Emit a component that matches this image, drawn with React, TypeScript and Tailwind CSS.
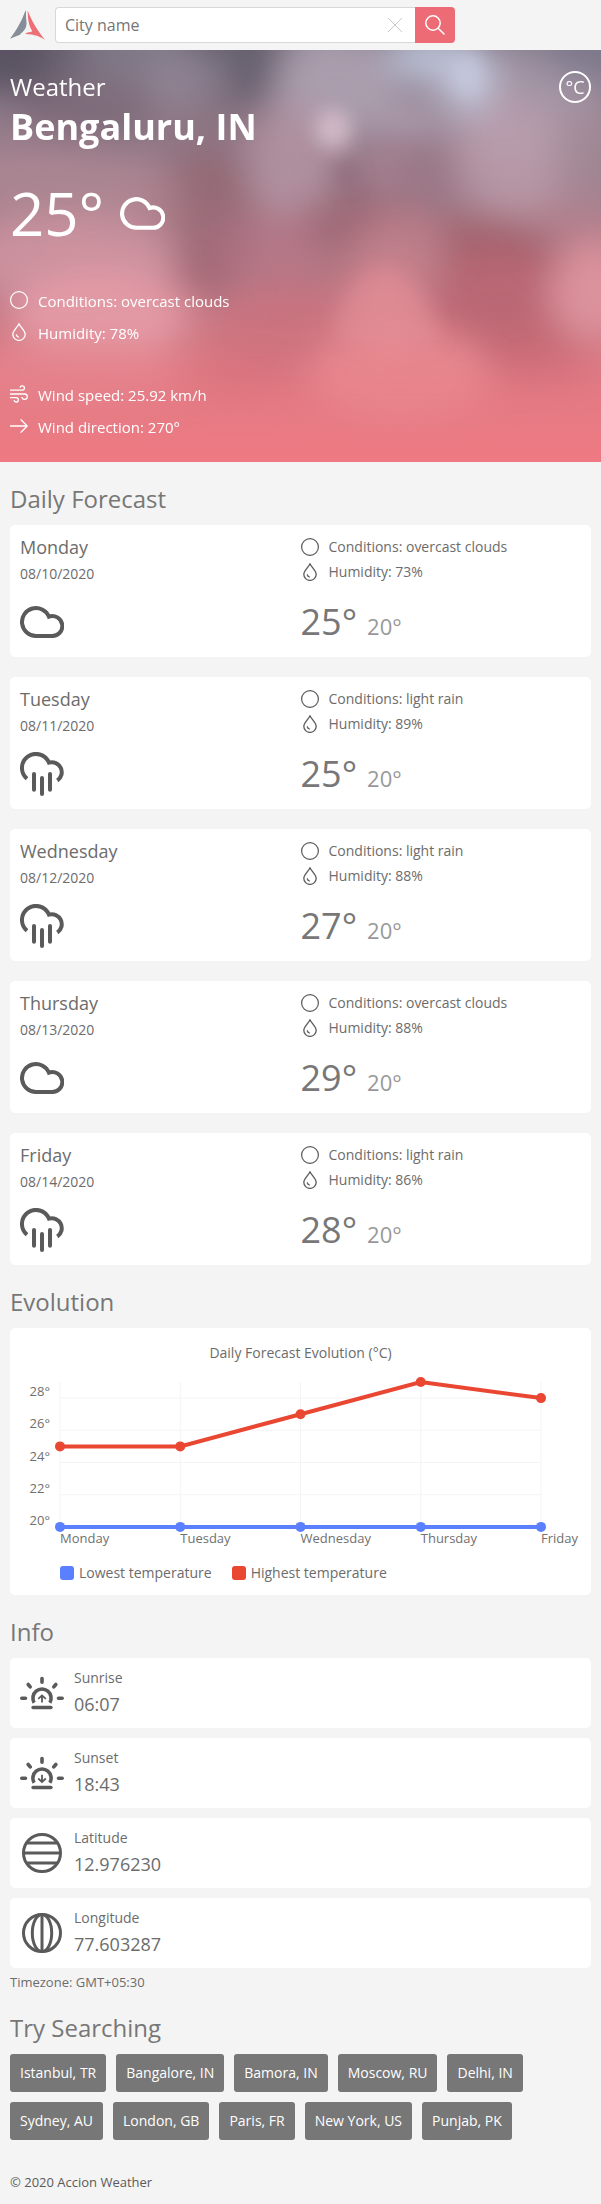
import React from "react";

type IconProps = { className?: string };

function Logo() {
  return (
    <svg viewBox="0 0 105 90" className="h-[30px] w-[35px]" aria-hidden="true">
      <path d="M47 1C38 26 22 58 0 86L29 74C35 62 49 58 49 40Z" fill="#868e99" />
      <path d="M47 1L49 42C49 58 38 66 29 74L20 77Z" fill="#868e99" />
      <path d="M53 1C64 32 84 64 105 90C92 80 74 73 46 72C50 66 62 68 67 63C58 52 53 30 53 1Z" fill="#ee6e77" />
    </svg>
  );
}

function CloudIcon({ className }: IconProps) {
  return (
    <svg viewBox="0 0 44 44" className={className} fill="none" stroke="currentColor" strokeWidth="4" aria-hidden="true">
      <path d="M16 36A14 14 0 1 1 28.9 16.6A10 10 0 1 1 32 36Z" />
    </svg>
  );
}

function RainIcon({ className }: IconProps) {
  return (
    <svg viewBox="0 0 44 44" className={className} fill="none" stroke="currentColor" strokeWidth="4" aria-hidden="true">
      <path d="M7 26.7A14 14 0 1 1 28.9 10.6A10 10 0 0 1 37.3 28.5" />
      <path d="M14 22V37.8M22 26V42M30 22V37.8" strokeLinecap="round" />
    </svg>
  );
}

function CircleIcon({ className }: IconProps) {
  return (
    <svg viewBox="0 0 18 18" className={className} fill="none" stroke="currentColor" strokeWidth="1.2" aria-hidden="true">
      <circle cx="9" cy="9" r="8.4" />
    </svg>
  );
}

function DropIcon({ className }: IconProps) {
  return (
    <svg viewBox="0 0 18 18" className={className} fill="none" stroke="currentColor" strokeWidth="1.3" strokeLinecap="round" strokeLinejoin="round" aria-hidden="true">
      <path d="M9 .7C7.6 4 2.8 7.9 2.8 11.3a6.2 6.1 0 0 0 12.4 0C15.2 7.9 10.4 4 9 .7Z" />
      <path d="M6.3 11.8Q6.8 13.5 8.4 14" />
    </svg>
  );
}

function WindIcon({ className }: IconProps) {
  return (
    <svg viewBox="0 0 18 18" className={className} fill="none" stroke="currentColor" strokeWidth="1.3" aria-hidden="true">
      <path d="M0 5.2H12.3a2.2 2.2 0 1 0-2.2-2.5" />
      <path d="M0 9H14.6a2.7 2.7 0 1 1-2.7 3" />
      <path d="M0 12.6H6.2a2.2 2.2 0 1 1-2.2 2.5" />
    </svg>
  );
}

function ArrowIcon({ className }: IconProps) {
  return (
    <svg viewBox="0 0 18 18" className={className} fill="none" stroke="currentColor" strokeWidth="1.3" strokeLinecap="round" strokeLinejoin="round" aria-hidden="true">
      <path d="M.5 9H17.2M11 2.8L17.2 9L11 15.2" />
    </svg>
  );
}

function SunIcon({ rising, className }: IconProps & { rising: boolean }) {
  return (
    <svg viewBox="0 0 44 44" className={className} fill="none" stroke="currentColor" strokeWidth="3.6" strokeLinecap="round" aria-hidden="true">
      <path d="M22 7.5V11.2M1.8 27.3H5.5M38.5 27.3H42.2M8.2 13.5L10.2 15.9M35.8 13.5L33.8 15.9" />
      <path d="M14.2 31.8A9.1 9.1 0 1 1 29.8 31.8" strokeLinecap="butt" />
      <path d="M13.1 36.5H30.9" />
      <path
        d={rising ? "M22 31.6V24.8M18.2 27.9L22 24.4L25.8 27.9" : "M22 23.8V30.6M18.2 27.5L22 31L25.8 27.5"}
        strokeWidth="1.8"
        strokeLinecap="butt"
      />
    </svg>
  );
}

function LatitudeIcon({ className }: IconProps) {
  return (
    <svg viewBox="0 0 44 44" className={className} fill="none" stroke="currentColor" strokeWidth="3" aria-hidden="true">
      <circle cx="22" cy="22" r="18.5" />
      <path d="M6.5 12H37.5M3.5 22H40.5M6.5 32H37.5" />
    </svg>
  );
}

function LongitudeIcon({ className }: IconProps) {
  return (
    <svg viewBox="0 0 44 44" className={className} fill="none" stroke="currentColor" strokeWidth="3" aria-hidden="true">
      <circle cx="22" cy="22" r="18.5" />
      <ellipse cx="22" cy="22" rx="9.7" ry="18.5" />
      <path d="M22 3.5V40.5" />
    </svg>
  );
}

const blobs: [number, number, number, number, string, number][] = [
  // cx, cy, rx, ry, colour, opacity
  [0, 0, 90, 42, "#5a5262", 1],
  [235, 8, 55, 55, "#645d6b", 0.9],
  [100, 5, 60, 20, "#7c7583", 0.6],
  [190, 28, 38, 26, "#958c9c", 0.7],
  [335, 35, 60, 55, "#ada1b0", 0.9],
  [520, 60, 90, 60, "#a89bab", 0.8],
  [430, 8, 45, 25, "#c0c6dc", 0.9],
  [470, 28, 26, 34, "#c6cade", 0.9],
  [405, 68, 28, 18, "#b9abbd", 0.7],
  [600, 0, 60, 30, "#7d788c", 0.9],
  [85, 60, 70, 32, "#7b6876", 0.8],
  [215, 90, 60, 45, "#8b7380", 0.7],
  [50, 140, 100, 45, "#ac8893", 0.8],
  [210, 170, 50, 70, "#946773", 0.85],
  [150, 160, 38, 45, "#b38793", 0.5],
  [290, 110, 45, 60, "#b495a4", 0.8],
  [420, 125, 70, 40, "#997786", 0.8],
  [515, 110, 60, 60, "#bfa0ae", 0.7],
  [350, 135, 20, 20, "#8d6a79", 0.8],
  [382, 122, 20, 16, "#b08b9b", 0.7],
  [590, 110, 40, 60, "#a38995", 0.7],
  [360, 175, 70, 30, "#98636f", 0.7],
  [490, 215, 80, 50, "#9e606c", 0.9],
  [580, 175, 50, 30, "#b5828f", 0.6],
  [70, 210, 110, 45, "#cd94a1", 0.9],
  [265, 200, 60, 40, "#b8788a", 0.6],
  [400, 210, 48, 50, "#c2838f", 0.8],
  [205, 215, 30, 30, "#a66777", 0.6],
  [100, 265, 90, 45, "#e69ca7", 0.9],
  [280, 285, 60, 50, "#c9717d", 0.6],
  [500, 260, 70, 60, "#bd6974", 0.85],
  [598, 240, 50, 50, "#de959e", 0.9],
  [385, 265, 42, 50, "#de8a92", 0.8],
  [400, 325, 90, 50, "#e88991", 0.9],
  [240, 325, 45, 25, "#d3717b", 0.6],
  [540, 310, 50, 25, "#cb6b76", 0.7],
  [70, 325, 110, 35, "#e68892", 0.7],
];

function CloudySky() {
  return (
    <svg
      viewBox="0 0 601 412"
      preserveAspectRatio="none"
      className="absolute inset-0 h-full w-full"
      aria-hidden="true"
    >
      <defs>
        <linearGradient id="sky" x1="0" y1="0" x2="0" y2="1">
          <stop offset="0" stopColor="#837b8a" />
          <stop offset=".3" stopColor="#9c7c8a" />
          <stop offset=".55" stopColor="#b87682" />
          <stop offset=".75" stopColor="#d97b85" />
          <stop offset="1" stopColor="#ee7982" />
        </linearGradient>
        <linearGradient id="glow" x1="0" y1="0" x2="0" y2="1">
          <stop offset=".7" stopColor="#ee7982" stopOpacity="0" />
          <stop offset=".9" stopColor="#ea7c85" stopOpacity=".45" />
          <stop offset="1" stopColor="#ee7982" />
        </linearGradient>
        <filter id="soft" x="-50%" y="-50%" width="200%" height="200%">
          <feGaussianBlur stdDeviation="17" />
        </filter>
        <filter id="softer" x="-50%" y="-50%" width="200%" height="200%">
          <feGaussianBlur stdDeviation="9" />
        </filter>
      </defs>
      <rect width="601" height="412" fill="url(#sky)" />
      <g filter="url(#soft)">
        {blobs.map(([cx, cy, rx, ry, fill, opacity], i) => (
          <ellipse key={i} cx={cx} cy={cy} rx={rx} ry={ry} fill={fill} opacity={opacity} />
        ))}
      </g>
      <g filter="url(#softer)">
        <ellipse cx="333" cy="79" rx="18" ry="20" fill="#dac0ce" opacity=".8" />
        <ellipse cx="468" cy="24" rx="12" ry="22" fill="#c8cde2" opacity=".6" />
        <ellipse cx="346" cy="122" rx="10" ry="14" fill="#8b6877" opacity=".6" />
        <path d="M335 285Q345 230 385 218Q425 235 440 290Q400 310 335 285Z" fill="#e28d96" opacity=".5" />
      </g>
      <rect width="601" height="412" fill="url(#glow)" />
    </svg>
  );
}

const days = [
  { name: "Monday", date: "08/10/2020", conditions: "overcast clouds", humidity: 73, high: 25, low: 20 },
  { name: "Tuesday", date: "08/11/2020", conditions: "light rain", humidity: 89, high: 25, low: 20 },
  { name: "Wednesday", date: "08/12/2020", conditions: "light rain", humidity: 88, high: 27, low: 20 },
  { name: "Thursday", date: "08/13/2020", conditions: "overcast clouds", humidity: 88, high: 29, low: 20 },
  { name: "Friday", date: "08/14/2020", conditions: "light rain", humidity: 86, high: 28, low: 20 },
];

const info = [
  { label: "Sunrise", value: "06:07", icon: <SunIcon rising className="size-11 shrink-0" /> },
  { label: "Sunset", value: "18:43", icon: <SunIcon rising={false} className="size-11 shrink-0" /> },
  { label: "Latitude", value: "12.976230", icon: <LatitudeIcon className="size-11 shrink-0" /> },
  { label: "Longitude", value: "77.603287", icon: <LongitudeIcon className="size-11 shrink-0" /> },
];

const cities = [
  "Istanbul, TR", "Bangalore, IN", "Bamora, IN", "Moscow, RU", "Delhi, IN",
  "Sydney, AU", "London, GB", "Paris, FR", "New York, US", "Punjab, PK",
];

function SectionTitle({ children }: { children: React.ReactNode }) {
  return <h2 className="mt-[21px] mb-2.5 text-2xl leading-8 text-[#777]">{children}</h2>;
}

function HeroRow({ icon, children }: { icon: React.ReactNode; children: React.ReactNode }) {
  return (
    <li className="flex items-start gap-2.5">
      {icon}
      <span>{children}</span>
    </li>
  );
}

function DayCard({ day }: { day: (typeof days)[number] }) {
  const Icon = day.conditions === "light rain" ? RainIcon : CloudIcon;
  return (
    <article className="grid grid-cols-2 rounded-[5px] bg-white pt-2.5 pb-[11px]">
      <div className="pl-2.5">
        <h3 className="text-lg leading-6">{day.name}</h3>
        <p className="mt-[5px] text-sm leading-5">{day.date}</p>
        <Icon className="mt-4 size-11 text-[#5a5a5a]" />
      </div>
      <div className="pt-0.5">
        <ul className="flex flex-col gap-[5px] text-sm leading-5">
          <li className="flex items-center gap-2.5">
            <CircleIcon className="size-[18px] text-[#5a5a5a]" />
            Conditions: {day.conditions}
          </li>
          <li className="flex items-center gap-2.5">
            <DropIcon className="size-[18px] text-[#5a5a5a]" />
            Humidity: {day.humidity}%
          </li>
        </ul>
        <p className="mt-4 flex items-baseline gap-2.5">
          <span className="text-4xl leading-[48px] text-[#777]">{day.high}°</span>
          <span className="text-[22px] leading-6 text-[#999]">{day.low}°</span>
        </p>
      </div>
    </article>
  );
}

const chartX = (i: number) => 50 + i * 120.25;
const chartY = (t: number) => 12 + (29 - t) * 16.1;

function Series({ values, color }: { values: number[]; color: string }) {
  return (
    <g fill={color} stroke="none">
      <polyline
        points={values.map((v, i) => `${chartX(i)},${chartY(v)}`).join(" ")}
        fill="none"
        stroke={color}
        strokeWidth="4"
      />
      {values.map((v, i) => (
        <circle key={i} cx={chartX(i)} cy={chartY(v)} r="5" />
      ))}
    </g>
  );
}

function Chart() {
  return (
    <figure className="rounded-[5px] bg-white pt-[15px] pb-3">
      <figcaption className="text-center text-sm leading-5">Daily Forecast Evolution (°C)</figcaption>
      <svg viewBox="0 0 581 180" className="mt-[7px] block w-full" role="img" aria-label="Daily Forecast Evolution">
        <g stroke="#f4f4f4" strokeWidth="1">
          {[28, 26, 24, 22, 20].map((t) => (
            <line key={t} x1="50" x2={chartX(4)} y1={chartY(t)} y2={chartY(t)} />
          ))}
          {days.map((d, i) => (
            <line key={d.name} x1={chartX(i)} x2={chartX(i)} y1="12" y2={chartY(20)} />
          ))}
        </g>
        <g fill="#707070" fontSize="13">
          {[28, 26, 24, 22, 20].map((t) => (
            <text key={t} x="40" y={chartY(t) - 2} textAnchor="end">{t}°</text>
          ))}
          {days.map((d, i) => (
            <text key={d.name} x={chartX(i)} y="173">{d.name}</text>
          ))}
        </g>
        <Series values={days.map((d) => d.low)} color="#5a80ff" />
        <Series values={days.map((d) => d.high)} color="#ea4733" />
      </svg>
      <ul className="mt-[13px] flex gap-5 pl-[50px] text-sm leading-5">
        <li className="flex items-center gap-[5px]">
          <span className="size-3.5 rounded-[3px] bg-[#5a80ff]" />
          Lowest temperature
        </li>
        <li className="flex items-center gap-[5px]">
          <span className="size-3.5 rounded-[3px] bg-[#ea4733]" />
          Highest temperature
        </li>
      </ul>
    </figure>
  );
}

export default function App() {
  return (
    <div className="min-h-screen bg-[#f4f4f4] font-['Open_Sans','Noto_Sans',sans-serif] text-[#6c6c6c]">
      <header className="flex h-[50px] items-center gap-2.5 px-2.5">
        <a href="#" aria-label="Accion Weather"><Logo /></a>
        <form role="search" className="flex h-9 w-full max-w-[400px]" onSubmit={(e) => e.preventDefault()}>
          <div className="flex min-w-0 flex-1 items-center rounded-l border border-r-0 border-[#d8d8d8] bg-white pr-3">
            <input
              type="text"
              aria-label="City name"
              placeholder="City name"
              className="h-full min-w-0 flex-1 bg-transparent pl-[9px] text-base outline-none placeholder:text-[#757575]"
            />
            <button type="reset" aria-label="Clear">
              <svg viewBox="0 0 16 16" className="size-4" fill="none" stroke="#c8c8c8" strokeWidth="1" aria-hidden="true">
                <path d="M1 1L15 15M15 1L1 15" />
              </svg>
            </button>
          </div>
          <button type="submit" aria-label="Search" className="flex w-10 items-center justify-center rounded-r bg-[#ec6b74] text-white">
            <svg viewBox="0 0 20 20" className="size-5" fill="none" stroke="currentColor" strokeWidth="1.5" strokeLinecap="round" aria-hidden="true">
              <circle cx="8" cy="8" r="7.2" />
              <path d="M13.2 13.2L19 19" />
            </svg>
          </button>
        </form>
      </header>

      <section className="relative overflow-hidden text-white">
        <CloudySky />
        <div className="relative px-2.5 pt-[21px] pb-[25px]">
          <div className="flex items-start justify-between">
            <h1 className="text-2xl leading-8">
              Weather
              <strong className="block text-4xl leading-[48px] font-bold">Bengaluru, IN</strong>
            </h1>
            <button type="button" className="flex size-8 items-center justify-center rounded-full border-2 border-white text-lg leading-6">
              °C
            </button>
          </div>
          <div className="mt-[22px] flex items-center gap-4">
            <span className="text-[60px] leading-[80px]">25°</span>
            <CloudIcon className="size-[45px]" />
          </div>
          <ul className="mt-[38px] flex flex-col gap-3 text-[15px] leading-5 font-medium">
            <HeroRow icon={<CircleIcon className="size-[18px]" />}>Conditions: overcast clouds</HeroRow>
            <HeroRow icon={<DropIcon className="size-[18px]" />}>Humidity: 78%</HeroRow>
          </ul>
          <ul className="mt-[42px] flex flex-col gap-3 text-[15px] leading-5 font-medium">
            <HeroRow icon={<WindIcon className="size-[18px]" />}>Wind speed: 25.92 km/h</HeroRow>
            <HeroRow icon={<ArrowIcon className="size-[18px]" />}>Wind direction: 270°</HeroRow>
          </ul>
        </div>
      </section>

      <main className="px-2.5">
        <SectionTitle>Daily Forecast</SectionTitle>
        <div className="flex flex-col gap-5">
          {days.map((day) => <DayCard key={day.name} day={day} />)}
        </div>

        <SectionTitle>Evolution</SectionTitle>
        <Chart />

        <SectionTitle>Info</SectionTitle>
        <div className="flex flex-col gap-2.5">
          {info.map((item) => (
            <div key={item.label} className="flex items-center gap-2.5 rounded-[5px] bg-white px-2.5 text-[#5a5a5a]">
              {item.icon}
              <div className="pt-2.5 pb-3 text-[#6c6c6c]">
                <p className="text-sm leading-5">{item.label}</p>
                <p className="mt-1 text-lg leading-6">{item.value}</p>
              </div>
            </div>
          ))}
        </div>
        <p className="mt-[5px] text-[13px] leading-[18px]">Timezone: GMT+05:30</p>

        <SectionTitle>Try Searching</SectionTitle>
        <div className="flex flex-wrap gap-2.5 pr-10">
          {cities.map((city) => (
            <button key={city} type="button" className="h-[38px] rounded-[3px] bg-[#777] px-2.5 text-sm font-medium text-white">
              {city}
            </button>
          ))}
        </div>
      </main>

      <footer className="mt-[33px] px-2.5 pb-[13px] text-[13px] leading-[18px] text-[#5a5a5a]">© 2020 Accion Weather</footer>
    </div>
  );
}
